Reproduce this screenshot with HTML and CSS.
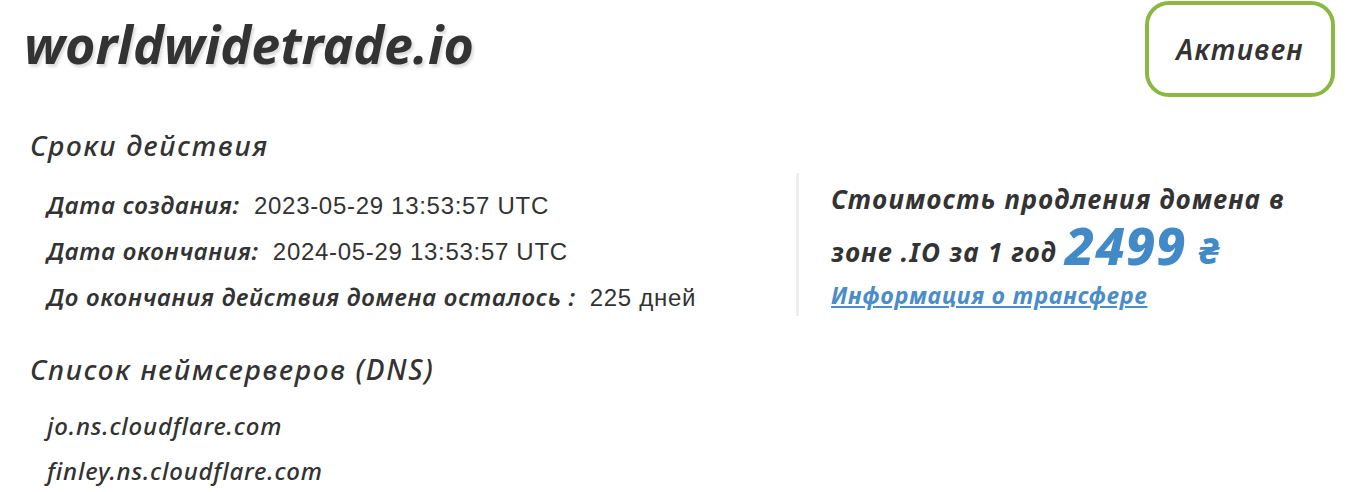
FILE: index.html
```html
<!DOCTYPE html>
<html lang="ru">
<head>
  <meta charset="UTF-8">
  <meta name="viewport" content="width=device-width, initial-scale=1.0">
  <title>worldwidetrade.io</title>
  <link rel="stylesheet" href="styles.css">
</head>
<body>
  <div class="head">
    <h1 class="domain">worldwidetrade.io</h1>
    <div class="status">Активен</div>
  </div>
  <div class="info">
    <div class="dates">
      <h2 class="caption">Сроки действия</h2>
      <ul class="rows">
        <li><b>Дата создания:</b> <span>2023-05-29 13:53:57 UTC</span></li>
        <li><b>Дата окончания:</b> <span>2024-05-29 13:53:57 UTC</span></li>
        <li><b>До окончания действия домена осталось :</b> <span>225 дней</span></li>
      </ul>
    </div>
    <div class="price">
      <p class="price-text">Стоимость продления домена в зоне .IO за 1 год <strong class="sum">2499</strong><strong class="cur">₴</strong></p>
      <a href="#" class="transfer">Информация о трансфере</a>
    </div>
  </div>
  <h2 class="caption dns">Список неймсерверов (DNS)</h2>
  <ul class="rows ns">
    <li>jo.ns.cloudflare.com</li>
    <li>finley.ns.cloudflare.com</li>
  </ul>
</body>
</html>
```

FILE: styles.css
```css
* {
  margin: 0;
  padding: 0;
  list-style: none;
}
body {
  font-family: "Noto Sans", "Open Sans", sans-serif;
  font-style: italic;
  color: #333;
  background: #fff;
}
.head {
  display: flex;
  justify-content: space-between;
  align-items: flex-start;
  padding: 1px 19px 0 24px;
}
.domain {
  font-size: 52px;
  font-weight: 700;
  line-height: 86px;
  text-shadow: 2px 3px 3px #ddd;
}
.status {
  width: 182px;
  height: 88px;
  border: 4px solid #8ab843;
  border-radius: 24px;
  display: flex;
  align-items: center;
  justify-content: center;
  font-size: 28px;
  font-weight: 600;
  letter-spacing: 1.2px;
}
.info {
  display: flex;
  margin-top: 26px;
}
.dates {
  width: 796px;
}
.caption {
  font-size: 28px;
  font-weight: 500;
  line-height: 44px;
  letter-spacing: 1.7px;
  padding-left: 30px;
}
.rows {
  padding: 15px 0 0 47px;
}
.rows li {
  font-size: 24px;
  line-height: 45px;
  letter-spacing: 0.75px;
}
.rows b {
  font-weight: 600;
  margin-right: 7px;
}
.rows span {
  font-family: "Liberation Sans", sans-serif;
  font-style: normal;
  font-size: 24px;
  letter-spacing: 0.7px;
}
.dns {
  margin-top: 27px;
}
.price {
  border-left: 3px solid #eeeff2;
  margin-top: 50px;
  padding-left: 32px;
  height: 143px;
}
.price-text {
  font-size: 26px;
  font-weight: 700;
  line-height: 53px;
  letter-spacing: 1.3px;
  width: 480px;
}
.sum,
.cur {
  color: #4189c7;
  font-weight: 800;
  line-height: 30px;
  vertical-align: -3px;
}
.sum {
  font-size: 52px;
  letter-spacing: 1px;
}
.cur {
  display: inline-block;
  font-size: 36px;
  letter-spacing: 0;
  margin-left: 12px;
  vertical-align: -2px;
}
.transfer {
  display: block;
  color: #4a8dc8;
  font-size: 23px;
  font-weight: 700;
  letter-spacing: 0.9px;
  line-height: 32px;
}
.ns {
  padding-top: 12px;
}
.ns li {
  font-weight: 500;
  letter-spacing: 0.8px;
}
```
